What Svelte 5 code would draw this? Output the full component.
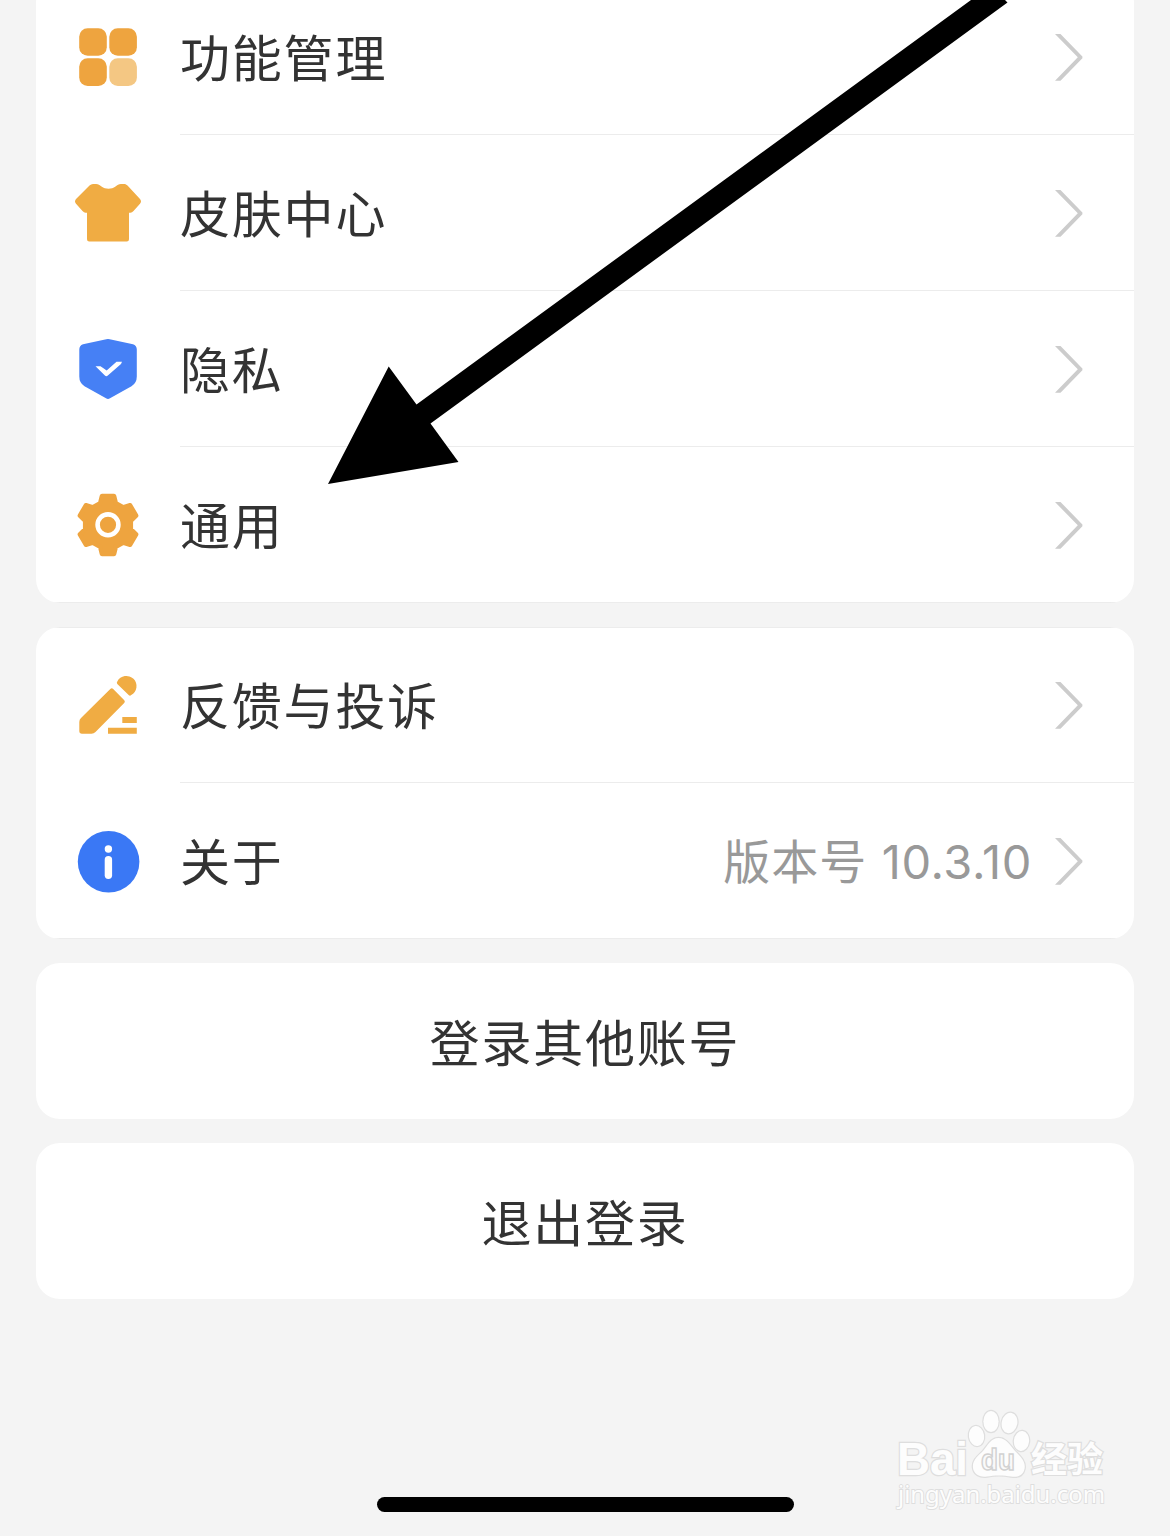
<script>
  const groups = [
    [
      { icon: 'grid', label: '功能管理' },
      { icon: 'shirt', label: '皮肤中心' },
      { icon: 'shield', label: '隐私' },
      { icon: 'gear', label: '通用' },
    ],
    [
      { icon: 'pencil', label: '反馈与投诉' },
      { icon: 'info', label: '关于', cjk: '版本号', version: '10.3.10' },
    ],
  ];
  const actions = ['登录其他账号', '退出登录'];

  // Outline of a six-toothed gear centred on 36,36.
  const tooth = [[-7.8, -21.8], [-6, -29], [6, -29], [7.8, -21.8]];
  const gear = [0, 1, 2, 3, 4, 5]
    .flatMap((i) => {
      const a = (i * Math.PI) / 3;
      return tooth.map(([x, y]) =>
        `${(36 + x * Math.cos(a) - y * Math.sin(a)).toFixed(2)},${(36 + x * Math.sin(a) + y * Math.cos(a)).toFixed(2)}`
      );
    })
    .join(' ');
</script>

<main class="screen">
  <div class="list">
    {#each groups as rows}
      <section class="card">
        {#each rows as row}
          <div class="row">
            <svg class="icon" viewBox="0 0 72 72" aria-hidden="true">
              {#if row.icon === 'grid'}
                <g fill="#eea43f">
                  <rect x="7.2" y="7.200" width="27.6" height="27.6" rx="8.500" />
                  <rect x="37.3" y="7.200" width="27.6" height="27.6" rx="8.500" />
                  <rect x="7.2" y="37.3" width="27.6" height="27.6" rx="8.500" />
                  <rect x="37.3" y="37.3" width="27.6" height="27.6" rx="8.500" fill="#f4c783" />
                </g>
              {:else if row.icon === 'shirt'}
                <path fill="#f0ac43" d="M21 7H24C26.500 7 27.500 8 29.500 9.500C33.500 12.500 39.500 12.500 43.500 9.500C45.500 8 46.500 7 49 7H52C53.500 7 54.500 7.600 55.500 8.600L68 22Q70 24.500 68 26.700L61.500 34Q60 35.700 58.500 35.700H57V62.300Q57 64.500 54.800 64.500H17.200Q15 64.500 15 62.300V35.700H13.500Q12 35.700 10.500 34L4 26.700Q2 24.500 4 22L17.500 8.600Q19 7 21 7Z" />
              {:else if row.icon === 'shield'}
                <path fill="#4680f5" d="M34.300 6.300Q36 5.900 37.700 6.300L61 11.300Q64.800 12.500 64.800 16.500V43.500Q64.800 50 59.500 53.300L38 65.300Q36 66.500 34 65.300L12.500 53.300Q7.300 50 7.300 43.500V16.500Q7.300 12.500 11 11.300Z" />
                <path fill="#fff" d="M23.500 33.300H28.500L34.700 37.600L44.500 28.700H50L49 31L35.800 42.600Q34.300 43.700 32.900 42.600Z" />
              {:else if row.icon === 'gear'}
                <polygon points={gear} fill="#eea43f" stroke="#eea43f" stroke-width="4.600" stroke-linejoin="round" />
                <circle cx="36" cy="35.800" r="10.400" fill="none" stroke="#fff" stroke-width="4.600" />
              {:else if row.icon === 'pencil'}
                <g fill="#f0ac43">
                  <path d="M38.300 20Q39.700 18.500 41.200 20L52.300 31.200Q53.500 32.700 52.200 34L23.500 63Q21.800 64.700 19.500 64.700H10Q7.300 64.700 7.300 62V53Q7.300 50.700 9 49Z" />
                  <path d="M45.300 15Q44.300 13.800 45.300 12.400A10.200 10.200 0 1 1 59.200 26.100Q58 27.200 56.900 26.200Z" />
                  <path d="M50.300 48H64.800V54H50.300ZM36 58.700H64.800V64.700H36Z" />
                </g>
              {:else}
                <circle cx="36.600" cy="36.800" r="30.800" fill="#3a78f5" />
                <circle cx="36.400" cy="24" r="3.700" fill="#fff" />
                <rect x="32.700" y="31" width="7.400" height="23" rx="3.700" fill="#fff" />
              {/if}
            </svg>
            <div class="content">
              <span class="label">{row.label}</span>
              {#if row.version}
                <span class="value">{row.cjk} <span class="num">{row.version}</span></span>
              {/if}
              <svg class="chevron" viewBox="0 0 28 48" aria-hidden="true">
                <path fill="#ccc" d="M0 1H5.500L27.400 23.400V25.200L5.500 47.800H0L22.800 24.300Z" />
              </svg>
            </div>
          </div>
        {/each}
      </section>
    {/each}
    {#each actions as action}
      <button class="card action">{action}</button>
    {/each}
  </div>

  <div class="home-bar"></div>

  <svg class="pointer" viewBox="0 0 1170 500" aria-hidden="true">
    <polygon points="328,484 388.700,366.500 416.500,404.500 971,0 1005,0 1007.500,2.500 430.500,423.500 458.500,462" />
  </svg>

  <svg class="watermark" viewBox="0 0 240 120" aria-hidden="true">
    <g fill="#fdfdfd" stroke="#dedede" stroke-width="2.400" paint-order="stroke">
      <ellipse cx="96.500" cy="36" rx="7.600" ry="10" transform="rotate(-8 96.500 36)" />
      <ellipse cx="111" cy="21.500" rx="7.600" ry="10.500" />
      <ellipse cx="129.500" cy="23" rx="7.800" ry="10.300" transform="rotate(12 129.500 23)" />
      <ellipse cx="141.500" cy="41" rx="7.600" ry="10" transform="rotate(6 141.500 41)" />
      <path d="M118.500 38C126 38 130 45 135 51C141 57 146 62 144.500 69C143 76 137 77.500 131 76.500C124 75 114 75 107 76.500C99 77.500 94 74 93 68C92 60 98 56 103 51C108 45 111 38 118.500 38Z" />
      <text class="latin" x="17" y="75" font-size="46" textLength="71" lengthAdjust="spacingAndGlyphs">Bai</text>
      <text class="han" x="151" y="72" font-size="35" textLength="72" lengthAdjust="spacingAndGlyphs">经验</text>
      <text class="site" x="18" y="103" font-size="23" textLength="207" lengthAdjust="spacingAndGlyphs">jingyan.baidu.com</text>
    </g>
    <text class="du" x="101" y="70" font-size="29" textLength="34" lengthAdjust="spacingAndGlyphs">du</text>
  </svg>
</main>

<style>
  :global(body) {
    margin: 0;
    background: #f4f4f4;
  }
  .screen {
    position: relative;
    box-sizing: border-box;
    width: 1170px;
    height: 1536px;
    overflow: hidden;
    display: flex;
    flex-direction: column;
    justify-content: space-between;
    align-items: center;
    padding-bottom: 24px;
    background: #f4f4f4;
    color: #333;
    font-family: Inter, 'Noto Sans CJK SC', sans-serif;
  }
  .list {
    display: flex;
    flex-direction: column;
    gap: 24px;
    width: 1098px;
    margin-top: -21px;
  }
  .card {
    background: #fff;
    border-radius: 24px;
    overflow: hidden;
  }
  .row {
    display: flex;
    align-items: center;
    height: 156px;
    padding-left: 36px;
  }
  .row:first-child {
    box-shadow: inset 0 1px #ececec;
  }
  .row:last-child {
    box-shadow: inset 0 -1px #ececec;
  }
  .icon {
    flex: none;
    width: 72px;
    height: 72px;
    margin-right: 36px;
  }
  .content {
    flex: 1;
    box-sizing: border-box;
    height: 156px;
    display: flex;
    align-items: center;
    padding-right: 51px;
    border-bottom: 1px solid #ececec;
  }
  .label {
    flex: 1;
    padding-bottom: 3px;
  }
  .label,
  .action {
    font: 400 50px/72px 'Noto Sans CJK SC', sans-serif;
    letter-spacing: 1.8px;
    color: #333;
  }
  .value {
    font: 400 47px/72px 'Noto Sans CJK SC', sans-serif;
    letter-spacing: 1px;
    word-spacing: 3px;
    color: #999;
    white-space: pre;
  }
  .num {
    font-family: Inter, sans-serif;
    letter-spacing: 0.6px;
  }
  .chevron {
    width: 28px;
    height: 48px;
    margin-left: 23px;
  }
  .action {
    height: 156px;
    padding: 0 0 3px;
    border: 0;
    text-align: center;
  }
  .home-bar {
    width: 417px;
    height: 15px;
    border-radius: 8px;
    background: #000;
  }
  .pointer {
    position: absolute;
    top: 0;
    left: 0;
    width: 1170px;
    height: 500px;
  }
  .watermark {
    position: absolute;
    left: 880px;
    top: 1400px;
    width: 240px;
    height: 120px;
  }
  .latin,
  .du {
    font-family: 'Liberation Sans', sans-serif;
    font-weight: 700;
  }
  .du {
    fill: #fafafa;
    stroke: #d2d2d2;
    stroke-width: 1.5;
  }
  .han {
    font-family: 'Noto Sans CJK SC', sans-serif;
    font-weight: 700;
  }
  .site {
    font-family: 'Noto Sans', sans-serif;
    stroke-width: 1.8;
  }
</style>
